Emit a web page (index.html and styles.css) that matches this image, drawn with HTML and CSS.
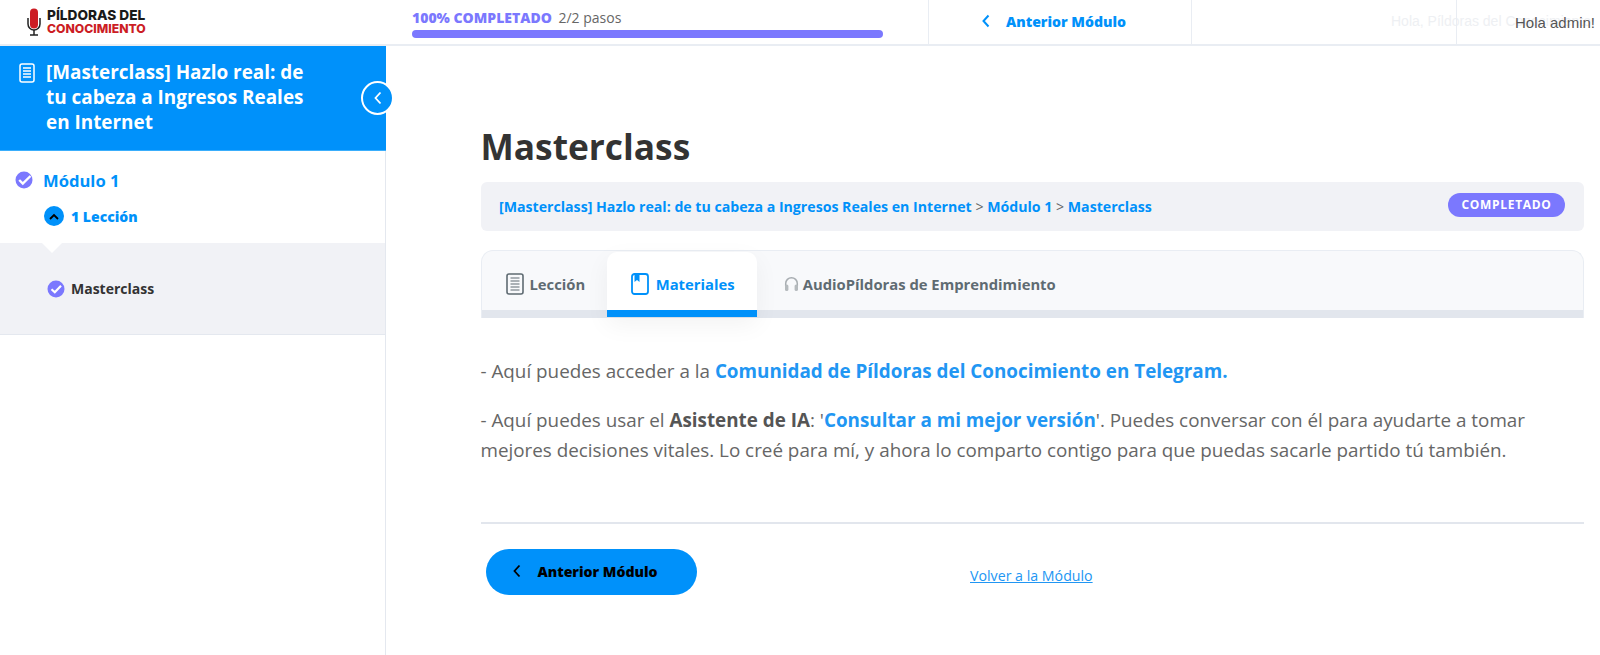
FILE: index.html
```html
<!DOCTYPE html>
<html lang="es">

<head>
    <meta charset="UTF-8" />
    <meta name="viewport" content="width=device-width, initial-scale=1.0" />
    <title>Masterclass</title>
    <link rel="stylesheet" href="styles.css">
</head>

<body>
    <header class="topbar">
        <div class="logo">
            <svg class="logo-mic" width="14" height="28" viewBox="0 0 14 28">
                <rect x="3" y="0.5" width="8" height="20" rx="4" fill="#cc1d24" />
                <path d="M1 10v6a6 6 0 0 0 12 0v-6" fill="none" stroke="#222" stroke-width="1.5" />
                <path d="M7 22v4.500M3 27h8" fill="none" stroke="#222" stroke-width="1.5" />
            </svg>
            <div class="logo-text">
                <span class="logo-top">PÍLDORAS DEL</span>
                <span class="logo-bottom">CONOCIMIENTO</span>
            </div>
        </div>
        <div class="progress">
            <div class="progress-label"><b>100% COMPLETADO</b> <span>2/2 pasos</span></div>
            <div class="progress-bar"></div>
        </div>
        <a class="top-prev" href="#">
            <svg width="10" height="14" viewBox="0 0 10 14">
                <path d="M7.500 1.500 2.500 7l5 5.500" fill="none" stroke="#0091fa" stroke-width="2" />
            </svg>
            Anterior Módulo
        </a>
        <div class="top-user">
            <span class="user-ghost">Hola, Píldoras del Conocimiento</span>
            <div class="user-cell">Hola admin!</div>
        </div>
    </header>

    <div class="layout">
        <aside class="sidebar">
            <div class="course-head">
                <svg class="doc-icon" width="16" height="20" viewBox="0 0 16 20">
                    <rect x="1" y="1" width="14" height="18" rx="2" fill="none" stroke="#fff" stroke-width="1.500" />
                    <path d="M4 5h8M4 8h8M4 11h8M4 14h8" stroke="#fff" stroke-width="1.300" />
                </svg>
                <h1>[Masterclass] Hazlo real: de tu cabeza a Ingresos Reales en Internet</h1>
                <button class="collapse">
                    <svg width="10" height="14" viewBox="0 0 10 14">
                        <path d="M7.500 1.500 2.500 7l5 5.500" fill="none" stroke="#fff" stroke-width="1.800" />
                    </svg>
                </button>
            </div>

            <div class="module">
                <svg class="check" width="18" height="18" viewBox="0 0 18 18">
                    <circle cx="9" cy="9" r="8.500" fill="#7b78fe" />
                    <path d="M4.200 9 7.800 12.500 15.500 5" fill="none" stroke="#fff" stroke-width="2.400" />
                </svg>
                <span>Módulo 1</span>
            </div>
            <div class="lesson-count">
                <span class="round-up">
                    <svg width="10" height="7" viewBox="0 0 10 7">
                        <path d="M1 6l4-4 4 4" fill="none" stroke="#000" stroke-width="1.800" />
                    </svg>
                </span>
                <span>1 Lección</span>
            </div>
            <div class="lesson-list">
                <div class="lesson-row">
                    <svg class="check" width="18" height="18" viewBox="0 0 18 18">
                        <circle cx="9" cy="9" r="8.500" fill="#7b78fe" />
                        <path d="M4.500 9.200 7.800 12.200 14 5.800" fill="none" stroke="#fff" stroke-width="2.200" />
                    </svg>
                    <span>Masterclass</span>
                </div>
            </div>
        </aside>

        <main class="content">
            <h2>Masterclass</h2>

            <div class="crumbs">
                <div>
                    <a href="#">[Masterclass] Hazlo real: de tu cabeza a Ingresos Reales en Internet</a> &gt;
                    <a href="#">Módulo 1</a> &gt;
                    <a href="#">Masterclass</a>
                </div>
                <span class="badge">COMPLETADO</span>
            </div>

            <div class="tabs">
                <div class="tab tab-lesson">
                    <svg width="18" height="22" viewBox="0 0 18 22">
                        <rect x="1" y="1" width="16" height="20" rx="2" fill="none" stroke="#5f6b72" stroke-width="1.600" />
                        <path d="M4.500 5h9M4.500 8h9M4.500 11h9M4.500 14h9M4.500 17h9" stroke="#5f6b72" stroke-width="1.100" />
                    </svg>
                    Lección
                </div>
                <div class="tab active">
                    <svg width="18" height="22" viewBox="0 0 18 22">
                        <rect x="1" y="1" width="16" height="20" rx="2.500" fill="none" stroke="#0091fa" stroke-width="1.800" />
                        <path d="M3.500 1h5v8L6 7 3.500 9z" fill="#0091fa" />
                    </svg>
                    Materiales
                </div>
                <div class="tab tab-audio">
                    <svg width="15" height="16" viewBox="0 0 15 16">
                        <path d="M1.700 10V7.500a5.800 5.800 0 0 1 11.600 0V10" fill="none" stroke="#a8adb1" stroke-width="1.500" />
                        <rect x="1" y="8.500" width="3.400" height="6.500" rx="1.600" fill="#b5babd" />
                        <rect x="10.600" y="8.500" width="3.400" height="6.500" rx="1.600" fill="#b5babd" />
                    </svg>
                    AudioPíldoras de Emprendimiento
                </div>
            </div>

            <div class="body-text">
                <p>- Aquí puedes acceder a la <a href="#">Comunidad de Píldoras del Conocimiento en Telegram.</a></p>
                <p>- Aquí puedes usar el <b>Asistente de IA</b>: '<a href="#">Consultar a mi mejor versión</a>'. Puedes conversar con él para ayudarte a tomar mejores decisiones vitales. Lo creé para mí, y ahora lo comparto contigo para que puedas sacarle partido tú también.</p>
            </div>

            <div class="footer-nav">
                <a class="prev-btn" href="#">
                    <svg width="10" height="14" viewBox="0 0 10 14">
                        <path d="M7.500 1.500 2.500 7l5 5.500" fill="none" stroke="#000" stroke-width="1.800" />
                    </svg>
                    Anterior Módulo
                </a>
                <a class="back-link" href="#">Volver a la Módulo</a>
            </div>
        </main>
    </div>
</body>

</html>
```

FILE: styles.css
```css
* {
    box-sizing: border-box;
}

body {
    margin: 0;
    height: 655px;
    overflow: hidden;
    font-family: "Open Sans", Arial, sans-serif;
    color: #666;
    background: white;
}

a {
    color: #0091fa;
    text-decoration: none;
}

svg {
    flex-shrink: 0;
}

/* top bar */
.topbar {
    display: flex;
    height: 46px;
    border-bottom: 2px solid #e9edf3;
    overflow: hidden;
}

.logo {
    display: flex;
    align-items: center;
    gap: 6px;
    width: 412px;
    padding-left: 27px;
    padding-bottom: 1px;
}

.logo-text {
    display: flex;
    flex-direction: column;
    font-family: Inter, Arial, sans-serif;
    font-weight: 800;
    line-height: 13px;
}

.logo-top {
    color: #1a1a1a;
    font-size: 13.700px;
}

.logo-bottom {
    color: #cc1d24;
    font-size: 12.200px;
}

.progress {
    width: 517px;
    padding-top: 9px;
    border-right: 1px solid #e9edf3;
}

.progress-label {
    font-size: 14px;
    line-height: 18px;
    color: #666;
}

.progress-label b {
    color: #7b78fe;
    font-weight: 800;
    margin-right: 3px;
}

.progress-bar {
    width: 471px;
    height: 8px;
    margin-top: 3px;
    border-radius: 4px;
    background: #7b78fe;
}

.top-prev {
    display: flex;
    align-items: center;
    gap: 15px;
    width: 263px;
    padding: 0 0 2px 52px;
    border-right: 1px solid #e9edf3;
    font-size: 14.100px;
    font-weight: 800;
}

.top-user {
    position: relative;
    flex: 1;
}

.user-ghost {
    position: absolute;
    left: 199px;
    top: 13px;
    white-space: nowrap;
    font-family: "Liberation Sans", Arial, sans-serif;
    font-size: 14px;
    color: #eef0f3;
}

.user-cell {
    position: absolute;
    left: 264px;
    top: 0;
    width: 200px;
    height: 44px;
    padding: 14px 0 0 58px;
    border-left: 1px solid #e9edf3;
    font-family: "Liberation Sans", Arial, sans-serif;
    font-size: 15px;
    color: #555;
    white-space: nowrap;
}

/* sidebar */
.layout {
    display: flex;
}

.sidebar {
    width: 386px;
    height: 609px;
    flex-shrink: 0;
    border-right: 1px solid #e4e8ef;
}

.course-head {
    position: relative;
    display: flex;
    gap: 11px;
    width: 386px;
    height: 105px;
    padding: 14px 70px 0 19px;
    background: #0091fa;
    border-bottom: 1px solid #3aaefc;
}

.doc-icon {
    margin-top: 3px;
}

.course-head h1 {
    margin: 0;
    font-size: 18.900px;
    line-height: 25px;
    font-weight: 700;
    color: white;
}

.collapse {
    position: absolute;
    right: -8px;
    top: 35px;
    display: flex;
    align-items: center;
    justify-content: center;
    width: 33px;
    height: 34px;
    padding: 0;
    border: 2px solid white;
    border-radius: 50%;
    background: #0091fa;
}

.module {
    display: flex;
    align-items: center;
    gap: 10px;
    height: 20px;
    margin-top: 19px;
    padding-left: 15px;
    font-size: 16.600px;
    font-weight: 700;
    color: #0091fa;
}

.lesson-count {
    display: flex;
    align-items: center;
    gap: 7px;
    margin-top: 16px;
    padding-left: 44px;
    font-size: 14px;
    font-weight: 800;
    color: #0091fa;
}

.round-up {
    display: flex;
    align-items: center;
    justify-content: center;
    width: 20px;
    height: 20px;
    border-radius: 50%;
    background: #0091fa;
}

.lesson-list {
    position: relative;
    height: 92px;
    margin-top: 17px;
    padding: 36px 0 0 47px;
    background: #f1f2f6;
    border-bottom: 1px solid #e4e8ef;
}

.lesson-list::before {
    content: "";
    position: absolute;
    left: 42px;
    top: 0;
    border-left: 10px solid transparent;
    border-right: 10px solid transparent;
    border-top: 10px solid white;
}

.lesson-row {
    display: flex;
    align-items: center;
    gap: 6px;
    font-size: 14px;
    font-weight: 700;
    color: #333;
}

/* main column */
.content {
    flex: 1;
    padding: 0 16px 0 94.500px;
}

.content h2 {
    margin: 75px 0 0;
    font-size: 35.300px;
    line-height: 50px;
    font-weight: 700;
    color: #333;
}

.crumbs {
    display: flex;
    justify-content: space-between;
    align-items: center;
    height: 49px;
    margin-top: 11px;
    padding: 0 19px 0 18.500px;
    border-radius: 6px;
    background: #f1f2f6;
    font-size: 14.150px;
}

.crumbs a {
    font-weight: 700;
}

.badge {
    width: 117px;
    height: 24px;
    margin-top: -3px;
    border-radius: 12px;
    background: #7b78fe;
    color: white;
    font-size: 12px;
    line-height: 24px;
    font-weight: 700;
    letter-spacing: 0.700px;
    text-align: center;
}

.tabs {
    display: flex;
    height: 68px;
    margin-top: 19px;
    padding-bottom: 8px;
    border: 1px solid #e9edf3;
    border-bottom: 0;
    border-radius: 12px 12px 0 0;
    background: linear-gradient(#f8f9fb 59px, #e2e6ed 59px);
}

.tab {
    display: flex;
    align-items: center;
    gap: 6px;
    padding: 7px 24px 0;
    font-size: 14.800px;
    font-weight: 700;
    color: #5f6b72;
}

.tab-lesson {
    padding-right: 21.500px;
}

.tab.active {
    gap: 7px;
    height: 65px;
    width: 150px;
    margin-top: 1px;
    padding-right: 0;
    padding-top: 6px;
    border-radius: 10px 10px 0 0;
    border-bottom: 7px solid #0091fa;
    background: white;
    color: #0091fa;
    box-shadow: 0 8px 24px rgba(0, 0, 0, 0.05);
}

.tab-audio {
    gap: 4px;
    padding-left: 27px;
}

.body-text {
    height: 206px;
    padding-top: 38px;
    border-bottom: 2px solid #e2e6ed;
    font-size: 18.830px;
    line-height: 30.500px;
}

.body-text p {
    margin: 0 0 18px;
}

.body-text a {
    color: #2196f3;
    font-weight: 700;
}

.body-text b {
    color: #555;
}

.footer-nav {
    display: flex;
    padding: 25px 0 0 5px;
}

.prev-btn {
    display: flex;
    align-items: center;
    gap: 16px;
    width: 211px;
    height: 46px;
    padding: 0 0 2px 26px;
    border-radius: 23px;
    background: #0091fa;
    color: black;
    font-size: 14.100px;
    font-weight: 800;
}

.back-link {
    margin: 17px 0 0 273.500px;
    font-size: 14.200px;
    line-height: 20px;
    color: #2196f3;
    text-decoration: underline;
}
```
